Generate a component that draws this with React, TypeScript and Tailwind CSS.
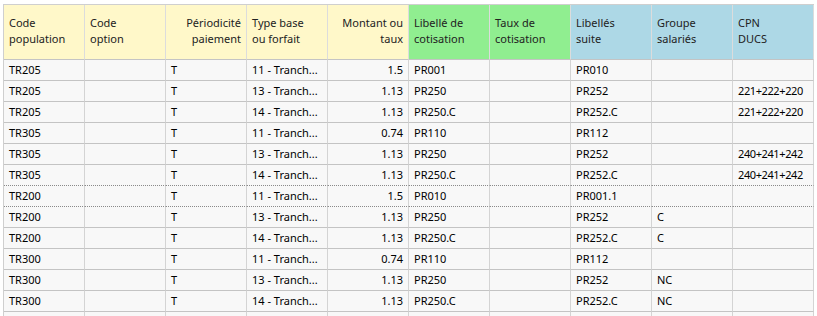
const headers: { label: [string, string]; bg: string; right?: boolean }[] = [
  { label: ["Code", "population"], bg: "bg-[#fff8c9]" },
  { label: ["Code", "option"], bg: "bg-[#fff8c9]" },
  { label: ["Périodicité", "paiement"], bg: "bg-[#fff8c9]", right: true },
  { label: ["Type base", "ou forfait"], bg: "bg-[#fff8c9]" },
  { label: ["Montant ou", "taux"], bg: "bg-[#fff8c9]", right: true },
  { label: ["Libellé de", "cotisation"], bg: "bg-[#90ee90]" },
  { label: ["Taux de", "cotisation"], bg: "bg-[#90ee90]" },
  { label: ["Libellés", "suite"], bg: "bg-[#add8e6]" },
  { label: ["Groupe", "salariés"], bg: "bg-[#add8e6]" },
  { label: ["CPN", "DUCS"], bg: "bg-[#add8e6]" },
];

const rows: string[][] = [
  ["TR205", "", "T", "11 - Tranch...", "1.5", "PR001", "", "PR010", "", ""],
  ["TR205", "", "T", "13 - Tranch...", "1.13", "PR250", "", "PR252", "", "221+222+220"],
  ["TR205", "", "T", "14 - Tranch...", "1.13", "PR250.C", "", "PR252.C", "", "221+222+220"],
  ["TR305", "", "T", "11 - Tranch...", "0.74", "PR110", "", "PR112", "", ""],
  ["TR305", "", "T", "13 - Tranch...", "1.13", "PR250", "", "PR252", "", "240+241+242"],
  ["TR305", "", "T", "14 - Tranch...", "1.13", "PR250.C", "", "PR252.C", "", "240+241+242"],
  ["TR200", "", "T", "11 - Tranch...", "1.5", "PR010", "", "PR001.1", "", ""],
  ["TR200", "", "T", "13 - Tranch...", "1.13", "PR250", "", "PR252", "C", ""],
  ["TR200", "", "T", "14 - Tranch...", "1.13", "PR250.C", "", "PR252.C", "C", ""],
  ["TR300", "", "T", "11 - Tranch...", "0.74", "PR110", "", "PR112", "", ""],
  ["TR300", "", "T", "13 - Tranch...", "1.13", "PR250", "", "PR252", "NC", ""],
  ["TR300", "", "T", "14 - Tranch...", "1.13", "PR250.C", "", "PR252.C", "NC", ""],
  ["", "", "", "", "", "", "", "", "", ""],
];

// row 6 is the focused one: dotted lines above and below
const dottedBottom = (i: number) => i === 5 || i === 6;

export default function App() {
  return (
    <div
      className="h-[316px] w-[817px] overflow-hidden bg-white pl-[3px] pt-[4px] text-[11px] text-black"
      style={{ fontFamily: '"Noto Sans", "DejaVu Sans", sans-serif' }}
    >
      <div className="grid w-[811px] grid-cols-[repeat(10,81px)] border-l border-t border-[#cfcfcf]">
        {headers.map((h, i) => (
          <div
            key={i}
            className={`flex h-[55px] flex-col justify-center border-b border-r border-b-[#c4c4c4] border-r-[#dcdcdc] px-[5px] pb-[2px] leading-[16px] text-[#222] ${h.bg} ${
              h.right ? "items-end text-right" : ""
            }`}
          >
            <span className="whitespace-nowrap">{h.label[0]}</span>
            <span className="whitespace-nowrap">{h.label[1]}</span>
          </div>
        ))}
        {rows.map((r, ri) =>
          r.map((c, ci) => (
            <div
              key={`${ri}-${ci}`}
              className={`h-[21px] overflow-hidden whitespace-nowrap border-r border-b border-r-[#d4d4d4] bg-[#f8f8f8] px-[5px] leading-[20px] ${
                dottedBottom(ri) ? "border-b-[#8a8a8a] border-dotted [border-right-style:solid]" : "border-b-[#c4c4c4]"
              } ${ci === 4 ? "text-right" : ""} ${ci === 9 ? "tracking-[-0.4px]" : ""}`}
            >
              {c}
            </div>
          ))
        )}
      </div>
    </div>
  );
}
